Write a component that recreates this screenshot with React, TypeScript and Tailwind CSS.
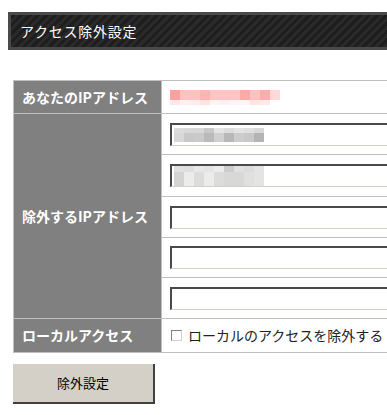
const ipBlocks = ['#ffa0a0', '#ffc2c2', '#ffc2c2', '#ffb4b4', '#ffc4c4', '#ffc4c4', '#ffc4c4', '#ffa8a8', '#ffc0c0', '#ffacac', '#ffd8d8'];
const ipBlocks2 = ['#ffe8e8', '#fff0f0', '#ffecec', '#ffe2e2', '#fff4f4', '#fff0f0', '#fff4f4', '#fff4f4', '#ffe4e4', '#ffeaea'];
const in1a = ['#dcdcdc', '#d8d8d8', '#d8d8d8', '#c8c8c8', '#e4e4e4', '#dcdcdc', '#e4e4e4', '#e0e0e0', '#d8d8d8'];
const in1b = ['#d8d8d8', '#c8c8c8', '#cacaca', '#bababa', '#d0d0d0', '#b8b8b8', '#cccccc', '#c8c8c8', '#b4b4b4'];
const in2a = ['#e0e0e0', '#dedede', '#e8e8e8', '#e4e4e4', '#ececec', '#cccccc', '#e0e0e0', '#dcdcdc', '#e4e4e4'];
const in2b = ['#d4d4d4', '#ececec', '#dcdcdc', '#ececec', '#dcdcdc', '#d8d8d8', '#d8d8d8', '#e0e0e0', '#e4e4e4'];

const Pixels = ({ rows, h }: { rows: string[][]; h: number[] }) => (
  <div className="flex flex-col">
    {rows.map((row, i) => (
      <div key={i} className="flex">
        {row.map((c, j) => (
          <div key={j} className="w-[10px]" style={{ backgroundColor: c, height: h[i] }} />
        ))}
      </div>
    ))}
  </div>
);

const Field = ({ children }: { children?: React.ReactNode }) => (
  <div className="w-[240px] h-[23px] bg-white border-t-2 border-l-2 border-b border-r border-t-[#4a4a4a] border-l-[#4a4a4a] border-b-[#d4d0c8] border-r-[#d4d0c8] flex items-center pl-[2px]">
    {children}
  </div>
);

export default function App() {
  const cell = 'border border-[#c0c0c0]';
  const label = `${cell} bg-[#808080] text-white font-bold text-[14px] text-left pl-[8px] w-[148px]`;
  return (
    <div className="w-[387px] h-[415px] overflow-hidden bg-white font-['Noto_Sans_CJK_JP',sans-serif]">
      <div className="pt-[12px] pl-[8px]">
        <div className="h-[38px] w-[420px] border-[3px] border-[#4a4a4a] bg-[repeating-linear-gradient(135deg,#1e1e1e_0px,#1e1e1e_3px,#2a2a2a_3px,#2a2a2a_6px)] flex items-center pl-[9px] text-white text-[14px] tracking-[0.75px]">
          アクセス除外設定
        </div>
      </div>
      <table className="ml-[13px] mt-[30px] border-collapse w-[420px]">
        <tbody>
          <tr className="h-[33px]">
            <th className={label}>あなたのIPアドレス</th>
            <td className={`${cell} pl-[8px]`}>
              <Pixels rows={[ipBlocks, ipBlocks2]} h={[10, 5]} />
            </td>
          </tr>
          <tr className="h-[41px]">
            <th className={label} rowSpan={5}>除外するIPアドレス</th>
            <td className={`${cell} pl-[8px]`}>
              <Field>
                <Pixels rows={[in1a, in1b]} h={[5, 9]} />
              </Field>
            </td>
          </tr>
          <tr className="h-[42px]">
            <td className={`${cell} pl-[8px]`}>
              <Field>
                <Pixels rows={[in2a, in2b]} h={[6, 14]} />
              </Field>
            </td>
          </tr>
          <tr className="h-[41px]">
            <td className={`${cell} pl-[8px]`}><Field /></td>
          </tr>
          <tr className="h-[40px]">
            <td className={`${cell} pl-[8px]`}><Field /></td>
          </tr>
          <tr className="h-[41px]">
            <td className={`${cell} pl-[8px]`}><Field /></td>
          </tr>
          <tr className="h-[34px]">
            <th className={label}>ローカルアクセス</th>
            <td className={`${cell} pl-[9px] text-[14px] text-[#222]`}>
              <label className="flex items-center gap-[6px]">
                <span className="w-[11px] h-[11px] border border-[#808080] border-r-[#d4d0c8] border-b-[#d4d0c8] bg-white inline-block" />
                ローカルのアクセスを除外する
              </label>
            </td>
          </tr>
        </tbody>
      </table>
      <button className="ml-[13px] mt-[11px] w-[142px] h-[40px] bg-[#d4d0c8] border-b-2 border-r-2 border-[#404040] text-[13px] text-black">
        除外設定
      </button>
    </div>
  );
}
